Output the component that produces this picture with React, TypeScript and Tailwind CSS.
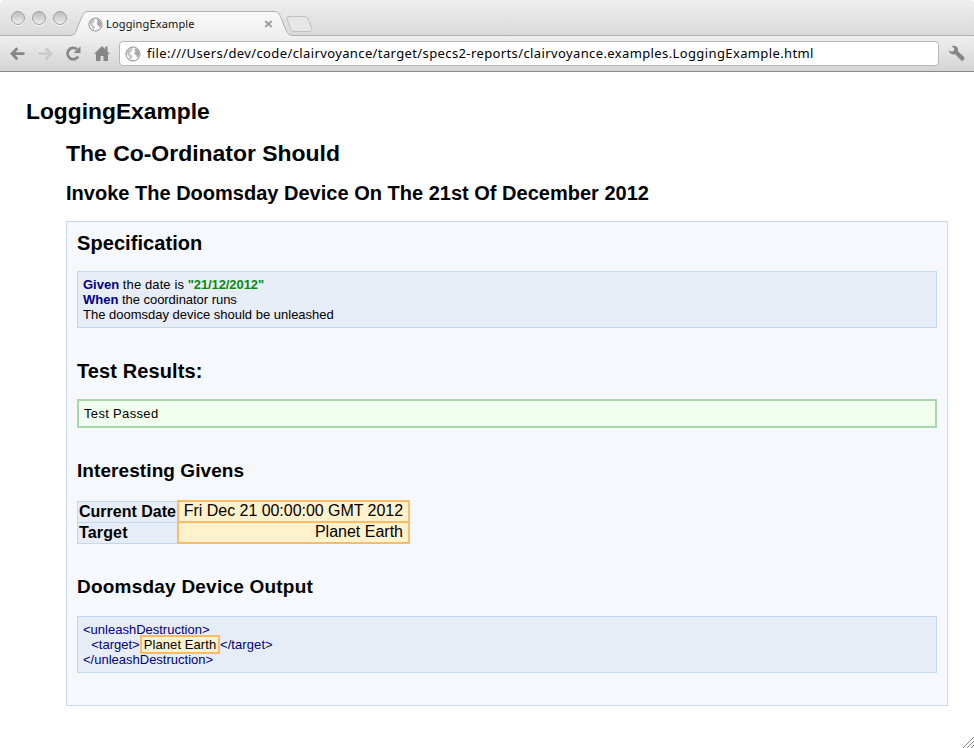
import React from "react";

function Globe({ className }: { className: string }) {
  return (
    <svg viewBox="0 0 16 16" className={className}>
      <circle cx="8" cy="8" r="7" fill="#fcfcfc" stroke="#8a8a8a" strokeWidth="1" />
      <path d="M2 5 3.800 2.800 6.400 1.800 7.600 3 6.400 4.400 6.800 5.600 5 6.600 4.400 7.800 6.400 9.200 7.400 10.800 6.400 12.200 6 14 4.800 12.400 4.400 10.400 2.400 8.200Z" fill="#c0c0c0" />
      <path d="M9.800 2.200 12.400 3.400 13.900 5.800 14.200 8.600 12.800 11.400 11.800 11.400 11.400 9.200 9.800 8.200 9.400 6.600 10.400 5.200 9.400 3.800Z" fill="#a8a8a8" />
    </svg>
  );
}

function WindowButton() {
  return (
    <span className="size-[14px] rounded-full border border-[#9f9f9f] bg-linear-to-b from-[#bdbdbd] to-[#ededed] shadow-[0_1px_0_#fafafa]" />
  );
}

function TabStrip() {
  return (
    <div className="relative h-9 bg-linear-to-b from-[#efefef] to-[#d9d9d9]">
      <svg className="absolute left-0 top-0" width="974" height="36" viewBox="0 0 974 36" fill="none">
        <defs>
          <linearGradient id="tabFill" x1="0" y1="11" x2="0" y2="36" gradientUnits="userSpaceOnUse">
            <stop stopColor="#fafafa" />
            <stop offset="1" stopColor="#efefef" />
          </linearGradient>
        </defs>
        <path
          d="M0 35.500H70C74 35.500 75 33.500 76.500 30L82 16.500C83.500 13 85 11.500 88 11.500H274C277.500 11.500 279 13 280.500 16.500L286 30C287.500 33.500 289 35.500 293 35.500H974V36H0Z"
          fill="url(#tabFill)"
        />
        <path
          d="M0 35.500H70C74 35.500 75 33.500 76.500 30L82 16.500C83.500 13 85 11.500 88 11.500H274C277.500 11.500 279 13 280.500 16.500L286 30C287.500 33.500 289 35.500 293 35.500H974"
          stroke="#b0b0b0"
        />
        <path
          d="M289 16.500H304.500C306.500 16.500 307.500 17.300 308.300 19L311.500 28C312.300 30.500 311.500 31.500 309.500 31.500H295C292.500 31.500 291.300 30.500 290.500 28.500L287.200 19.500C286.500 17.500 287 16.500 289 16.500Z"
          fill="#e6e6e6"
          stroke="#c0c0c0"
        />
      </svg>
      <div className="relative flex h-9 items-start pl-[11px]">
        <div className="flex gap-[7px] pt-[11px]">
          <WindowButton />
          <WindowButton />
          <WindowButton />
        </div>
        <div className="mt-4 flex h-4 w-[187px] items-center pl-[21px]">
          <Globe className="size-[15px] shrink-0" />
          <span className="ml-[3px] whitespace-nowrap font-['Noto_Sans','Open_Sans',sans-serif] text-[11px] leading-4 tracking-[0.15px] text-[#111]">
            LoggingExample
          </span>
        </div>
        <svg className="ml-[10px] mt-5" width="9" height="8" viewBox="0 0 9 8">
          <path d="M1.200 1 7.800 7M7.800 1 1.200 7" stroke="#a2a2a2" strokeWidth="2.200" />
        </svg>
      </div>
    </div>
  );
}

function Toolbar() {
  return (
    <div className="flex h-9 items-start border-b border-[#8a8a8a] bg-linear-to-b from-[#efefef] to-[#d4d4d4] pl-[9px]">
      <svg className="mt-[9.500px]" width="16" height="16" viewBox="0 0 16 16" fill="none" stroke="#868686" strokeWidth="2.800">
        <path d="M8.300 2.200 3 7.700 8.300 13.200M3 7.700H15.500" />
      </svg>
      <svg className="ml-[13px] mt-[9.500px]" width="16" height="16" viewBox="0 0 16 16" fill="none" stroke="#cacaca" strokeWidth="2.800">
        <path d="M7.700 2.200 13 7.700 7.700 13.200M13 7.700H.5" />
      </svg>
      <svg className="ml-[11px] mt-[9px]" width="16" height="17" viewBox="0 0 16 17">
        <path d="M13.200 11.400A5.700 5.700 0 1 1 12 4.300" fill="none" stroke="#868686" strokeWidth="2.600" />
        <path d="M15.500 1.200V8H8.700Z" fill="#868686" />
      </svg>
      <svg className="ml-[13px] mt-[9px]" width="16" height="17" viewBox="0 0 16 17" fill="#868686">
        <path d="M8 1 11.200 4.200V1.500H13.500V6.500L16 9H14V16H9.500V11H6.500V16H2V9H0Z" />
      </svg>
      <div className="ml-[9px] mt-[5px] flex h-[25px] w-[820px] items-center rounded-[4px] border border-[#b8b8b8] bg-white pl-[5px]">
        <Globe className="size-4 shrink-0" />
        <span className="-mt-[2px] ml-[6px] whitespace-nowrap font-['Noto_Sans','Open_Sans',sans-serif] text-[13px] leading-5 tracking-[0.385px] text-black">
          file:///Users/dev/code/clairvoyance/target/specs2-reports/clairvoyance.examples.LoggingExample.html
        </span>
      </div>
      <svg className="ml-[9px] mt-[9px]" width="17" height="17" viewBox="0 0 17 17">
        <path
          d="M3.600 1.200C6 .3 8.600 1 9.700 3.200 10.200 4.300 10.200 5.300 9.900 6.200L16 12C16.900 13.200 16.300 15.200 14.600 15.700 14 15.900 13.400 15.700 13 15.300L7.300 9.300C4.600 10.100 1.500 8.800.8 5.400L3.700 6.800 6.200 5.800 6.300 3.200Z"
          fill="#858585"
        />
      </svg>
    </div>
  );
}

function CodeBox({ children }: { children: React.ReactNode }) {
  return (
    <div className="h-[57px] whitespace-pre border border-[#c6d8f0] bg-[#e7edf7] px-[5px] pt-[5px] text-[13px] leading-[15px]">
      {children}
    </div>
  );
}

function Givens() {
  const rows = [
    ["Current Date", "Fri Dec 21 00:00:00 GMT 2012"],
    ["Target", "Planet Earth"],
  ];
  return (
    <div className="mt-[17px] flex h-11 w-[333px] text-[16px]">
      <div className="mt-px h-[43px] w-[100px] border border-r-0 border-[#c6d8f0] bg-[#e7edf7] font-bold">
        <div className="h-[21px] whitespace-nowrap border-b border-[#c6d8f0] pl-px leading-[20px]">{rows[0][0]}</div>
        <div className="pl-px leading-[20px] tracking-[0.15px]">{rows[1][0]}</div>
      </div>
      <div className="h-11 w-[233px] border-2 border-[#fabc68] bg-[#fff2cc] text-right">
        <div className="h-[21px] whitespace-nowrap border-b-2 border-[#fabc68] pr-[5px] leading-[17px] tracking-[-0.04px]">{rows[0][1]}</div>
        <div className="pr-[5px] leading-[17px]">{rows[1][1]}</div>
      </div>
    </div>
  );
}

export default function App() {
  return (
    <div className="relative h-[748px] w-[974px] overflow-hidden rounded-t-[4px] bg-white font-['Liberation_Sans',Arial,sans-serif] text-black">
      <TabStrip />
      <Toolbar />
      <main className="px-[26px] pt-[25px]">
        <h1 className="h-7 text-[22.800px] font-bold leading-7">LoggingExample</h1>
        <div className="pl-10">
          <h2 className="mt-[14px] h-7 text-[22.950px] font-bold leading-7">The Co-Ordinator Should</h2>
          <h3 className="mt-[14px] h-6 text-[20px] font-bold leading-6 tracking-[0.01px]">
            Invoke The Doomsday Device On The 21st Of December 2012
          </h3>
          <section className="mt-4 h-[485px] border border-[#c6d8f0] bg-[#f5f8fd] px-[10px] pt-[9px]">
            <h3 className="mb-4 h-6 text-[20px] font-bold leading-6 tracking-[0.07px]">Specification</h3>
            <CodeBox>
              <div><b className="text-[#00008b]">Given</b><span className="tracking-[0.11px]"> the date is </span><b className="text-[#0a8a0a] tracking-[-0.1px]">"21/12/2012"</b></div>
              <div><b className="text-[#00008b]">When</b><span className="tracking-[-0.04px]"> the coordinator runs</span></div>
              <div>The doomsday device should be unleashed</div>
            </CodeBox>
            <h3 className="mt-[31px] h-6 text-[20px] font-bold leading-6 tracking-[0.1px]">Test Results:</h3>
            <div className="mt-4 h-[29px] border-2 border-[#a8d8ac] bg-[#f1ffee] pl-[5px] text-[13px] leading-[25px] tracking-[0.33px]">Test Passed</div>
            <h3 className="mt-[31px] h-6 text-[19px] font-bold leading-6 tracking-[0.08px]">Interesting Givens</h3>
            <Givens />
            <h3 className="mt-[31px] h-6 text-[19px] font-bold leading-6 tracking-[0.22px]">Doomsday Device Output</h3>
            <div className="mt-[17px] text-[#000080]">
              <CodeBox>
                <div>&lt;unleashDestruction&gt;</div>
                <div className="flex">
                  <span className="w-[56px] pl-px">{"  <target>"}</span>
                  <span className="relative -mt-[2px] ml-px h-[19px] w-20 border-2 border-[#fabc68] bg-[#fff2cc] text-center text-black tracking-[0.08px]">Planet Earth</span>
                  <span className="tracking-[0.08px]">&lt;/target&gt;</span>
                </div>
                <div className="-mt-[2px]">&lt;/unleashDestruction&gt;</div>
              </CodeBox>
            </div>
          </section>
        </div>
      </main>
      <svg className="absolute bottom-0 right-0" width="11" height="11" viewBox="0 0 11 11" stroke="#888">
        <path d="M0 11 11 0M4 11 11 4M8 11 11 8" />
      </svg>
    </div>
  );
}
